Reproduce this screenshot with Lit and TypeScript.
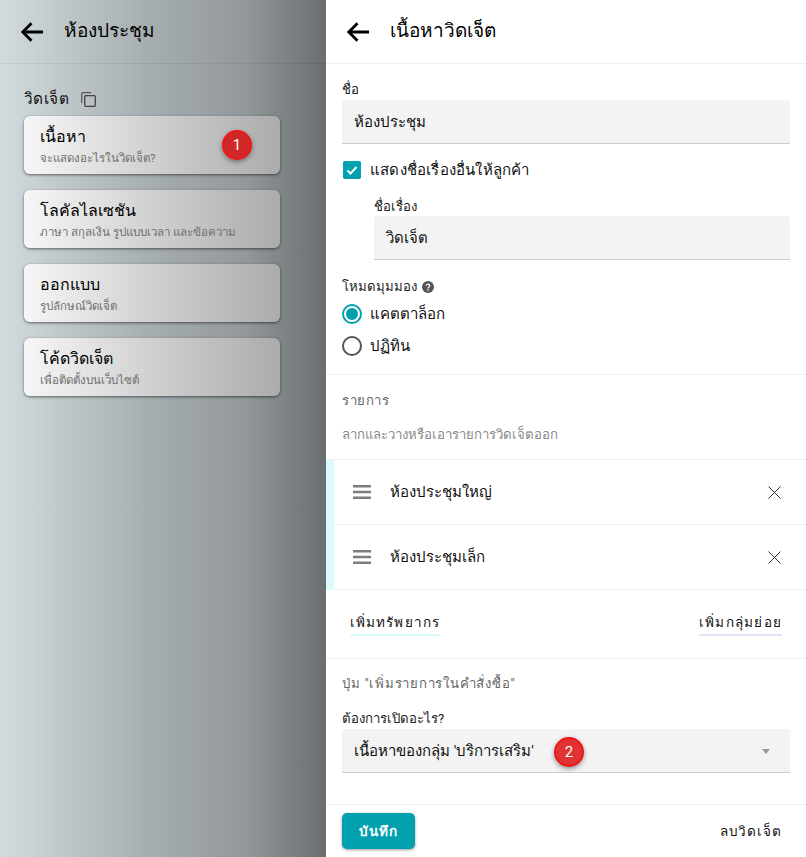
import { LitElement, html, css } from "lit";
import { customElement } from "lit/decorators.js";

const arrow = html`<svg class="arrow" viewBox="0 0 24 24"><path d="M23 12H3.5M11.5 3.2 2.8 12l8.7 8.8" fill="none" stroke="#000" stroke-width="2.8"/></svg>`;
const cross = html`<svg class="cross" viewBox="0 0 13 13"><path d="M.5.5l12 12M12.5.5l-12 12" stroke="#333" stroke-width="1" fill="none"/></svg>`;
const grip = html`<svg class="grip" viewBox="0 0 18 14"><path d="M0 0h18v2.6H0zM0 5.7h18v2.6H0zM0 11.4h18V14H0z" fill="#7d7d7d"/></svg>`;

const cards = [
  ["เนื้อหา", "จะแสดงอะไรในวิดเจ็ต?", true],
  ["โลคัลไลเซชัน", "ภาษา สกุลเงิน รูปแบบเวลา และข้อความ", false],
  ["ออกแบบ", "รูปลักษณ์วิดเจ็ต", false],
  ["โค้ดวิดเจ็ต", "เพื่อติดตั้งบนเว็บไซต์", false],
] as const;

@customElement("app-root")
export class AppRoot extends LitElement {
  static styles = css`
    :host { display: block; width: 806px; height: 857px; overflow: hidden;
      font-family: Roboto, "Noto Sans", "DejaVu Sans", sans-serif; color: #111; }
    * { box-sizing: border-box; }
    .page { display: flex; height: 857px; }
    .left { width: 326px; flex: none; background: linear-gradient(90deg, #d2dbdd 0%, #a7aeb1 45%, #92989b 75%, #6a6e70 100%); }
    .head { height: 64px; display: flex; align-items: center; padding: 0 0 1px 20px; border-bottom: 1px solid rgba(0,0,0,.06); }
    .arrow { width: 24px; height: 24px; display: block; flex: none; margin: 1px 20px 0 0; }
    .head h1 { margin: 0; font-size: 19px; font-weight: 500; line-height: 24px; color: #000; }
    .sec-title { display: flex; align-items: center; gap: 12px; padding: 17px 24px 0; height: 52px; font-size: 15.4px; font-weight: 500; letter-spacing: .45px; }
    .copy { width: 15px; height: 15px; display: block; margin-top: 1px; }
    .cards { display: flex; flex-direction: column; gap: 16px; padding: 0 46px 0 24px; }
    .card { position: relative; height: 58px; border-radius: 6px; padding: 10px 16px 0;
      background: linear-gradient(90deg, #f6f6f6 0%, #c9c9c9 60%, #ababab 100%);
      box-shadow: 0 1px 3px rgba(0,0,0,.55); }
    .card b { display: block; font-size: 16px; font-weight: 500; line-height: 22px; color: #000; }
    .card small { display: block; font-size: 11.5px; line-height: 18px; padding-top: 1px; color: #6f6f6f; }
    .badge { position: absolute; width: 30px; height: 30px; border-radius: 50%; background: #e03434; border: 2px solid #f01616;
      color: #fff; font-size: 15px; display: flex; align-items: center; justify-content: center; box-shadow: 0 2px 5px rgba(0,0,0,.4); }
    .card .badge { left: 198px; top: 14px; background: #d02828; }
    .right { flex: 1; background: #fff; display: flex; flex-direction: column; }
    .right .head { border-color: #eee; }
    .block { padding: 0 16px; border-bottom: 1px solid #eee; }
    label, .lab { display: block; font-size: 13.2px; line-height: 18px; color: #222; }
    label { padding-top: 1px; margin-bottom: 1px; }
    .field { height: 44px; background: #f3f3f3; border-radius: 4px 4px 0 0; border-bottom: 1px solid #ccc; padding: 0 12px; display: flex; align-items: center; font-size: 15px; position: relative; }
    .form { height: 311px; padding-top: 16px; }
    .check { display: flex; align-items: center; gap: 9px; height: 24px; margin: 14px 0 0 1px; font-size: 15px; letter-spacing: .2px; }
    .box { width: 18px; height: 18px; border-radius: 2px; background: #00a0ae; display: flex; align-items: center; justify-content: center; }
    .box svg { width: 12px; height: 12px; }
    .sub { margin: 15px 0 0 32px; }
    .sub label { margin-bottom: 0; }
    .mode { display: flex; align-items: center; gap: 5px; margin-top: 17px; padding-top: 1px; height: 18px; }
    .help { width: 12px; height: 12px; }
    .radio { display: flex; align-items: center; gap: 8px; height: 32px; font-size: 15px; }
    .radios { margin-top: 3px; }
    .dot { width: 20px; height: 20px; border-radius: 50%; border: 2px solid #555; flex: none; }
    .dot.on { border-color: #00a0ae; display: flex; align-items: center; justify-content: center; }
    .dot.on::after { content: ""; width: 12px; height: 12px; border-radius: 50%; background: #00a0ae; }
    .info { height: 85px; padding-top: 17px; }
    .cap { font-size: 13.2px; line-height: 18px; color: #666; letter-spacing: .6px; }
    .cap.wide { letter-spacing: .75px; }
    .hint { font-size: 13.2px; line-height: 18px; color: #8a8a8a; margin-top: 16px; }
    .rows { border-left: 8px solid #dcfbff; }
    .row { height: 65px; display: flex; align-items: center; border-bottom: 1px solid #eee; padding: 0 25px 0 19px; font-size: 15px; }
    .grip { width: 18px; height: 14px; margin-right: 19px; flex: none; }
    .row span { flex: 1; }
    .cross { width: 13px; height: 13px; display: block; margin-top: 1px; }
    .adds { height: 69px; display: flex; justify-content: space-between; align-items: flex-start; padding: 22px 24px 0; border-bottom: 1px solid #eee; font-size: 13.5px; letter-spacing: 1.1px; }
    .adds span { display: block; line-height: 20px; padding-bottom: 2px; border-bottom: 2px solid #dcfbff; }
    .adds span + span { border-color: #e2e2fb; letter-spacing: 1.25px; }
    .open { padding: 16px 16px 0; height: 146px; border-bottom: 1px solid #eee; }
    .open .lab { margin: 16px 0 2px; padding-top: 1px; height: 18px; }
    .open .badge { left: 212px; top: 8px; }
    .caret { position: absolute; right: 20px; top: 20px; width: 0; height: 0; border: 4px solid transparent; border-top: 5px solid #999; border-bottom: 0; }
    .foot { flex: 1; display: flex; align-items: flex-start; justify-content: space-between; padding: 8px 24px 0 16px; }
    .save { width: 73px; height: 36px; background: #00a0ae; color: #fff; border-radius: 5px; display: flex; align-items: center; justify-content: center; font-size: 13.5px; font-weight: 700; letter-spacing: 1px; box-shadow: 0 1px 3px rgba(0,0,0,.4); }
    .del { font-size: 13.5px; letter-spacing: .9px; line-height: 36px; }
  `;

  render() {
    return html`<div class="page">
      <aside class="left">
        <div class="head">${arrow}<h1>ห้องประชุม</h1></div>
        <div class="sec-title">วิดเจ็ต
          <svg class="copy" viewBox="0 0 15 15"><path d="M10 .7H2A1.3 1.3 0 0 0 .7 2v9" fill="none" stroke="#555" stroke-width="1.2"/><rect x="3.7" y="3.7" width="10.6" height="10.6" rx="1" fill="none" stroke="#444" stroke-width="1.3"/></svg>
        </div>
        <div class="cards">
          ${cards.map(([t, s, b]) => html`<div class="card"><b>${t}</b><small>${s}</small>${b ? html`<div class="badge">1</div>` : ""}</div>`)}
        </div>
      </aside>
      <main class="right">
        <div class="head">${arrow}<h1>เนื้อหาวิดเจ็ต</h1></div>
        <section class="block form">
          <label>ชื่อ</label>
          <div class="field">ห้องประชุม</div>
          <div class="check"><div class="box"><svg viewBox="0 0 12 12"><path d="M1.5 6.5 4.5 9.5 10.5 3" fill="none" stroke="#fff" stroke-width="2"/></svg></div>แสดงชื่อเรื่องอื่นให้ลูกค้า</div>
          <div class="sub"><label>ชื่อเรื่อง</label><div class="field">วิดเจ็ต</div></div>
          <div class="lab mode">โหมดมุมมอง
            <svg class="help" viewBox="0 0 12 12"><circle cx="6" cy="6" r="6" fill="#555"/><path d="M4.2 4.6a1.8 1.6 0 1 1 2.6 1.5C6.2 6.5 6 6.8 6 7.4" fill="none" stroke="#fff" stroke-width="1.2"/><rect x="5.3" y="8.3" width="1.4" height="1.4" fill="#fff"/></svg>
          </div>
          <div class="radios">
            <div class="radio"><div class="dot on"></div>แคตตาล็อก</div>
            <div class="radio"><div class="dot"></div>ปฏิทิน</div>
          </div>
        </section>
        <section class="block info">
          <div class="cap">รายการ</div>
          <div class="hint">ลากและวางหรือเอารายการวิดเจ็ตออก</div>
        </section>
        <div class="rows">
          <div class="row">${grip}<span>ห้องประชุมใหญ่</span>${cross}</div>
          <div class="row">${grip}<span>ห้องประชุมเล็ก</span>${cross}</div>
        </div>
        <div class="adds"><span>เพิ่มทรัพยากร</span><span>เพิ่มกลุ่มย่อย</span></div>
        <section class="open">
          <div class="cap wide">ปุ่ม "เพิ่มรายการในคำสั่งซื้อ"</div>
          <div class="lab">ต้องการเปิดอะไร?</div>
          <div class="field">เนื้อหาของกลุ่ม 'บริการเสริม'<div class="badge">2</div><div class="caret"></div></div>
        </section>
        <div class="foot"><div class="save">บันทึก</div><div class="del">ลบวิดเจ็ต</div></div>
      </main>
    </div>`;
  }
}
